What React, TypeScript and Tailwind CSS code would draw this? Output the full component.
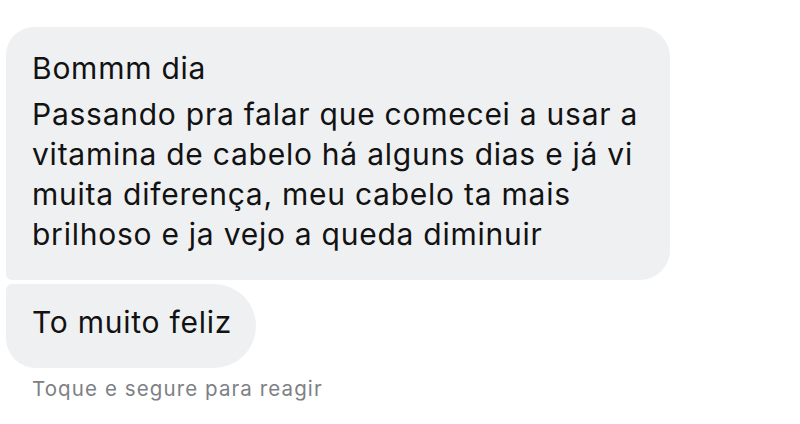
export default function App() {
  const lines = [
    "Passando pra falar que comecei a usar a",
    "vitamina de cabelo há alguns dias e já vi",
    "muita diferença, meu cabelo ta mais",
    "brilhoso e ja vejo a queda diminuir",
  ];

  return (
    <div className="w-[800px] h-[424px] bg-white overflow-hidden font-['Inter',sans-serif]">
      <div className="flex flex-col items-start pl-[6px] pt-[27px]">
        <div className="w-[664px] bg-[#eff0f2] rounded-tl-[28px] rounded-tr-[30px] rounded-br-[30px] rounded-bl-[6px] pl-[26px] pt-[21px] pb-[26px] text-[30px] leading-[40px] tracking-[0.75px] text-[#121212]">
          <p className="mb-[6px]">Bommm dia</p>
          {lines.map((l) => (
            <p key={l} className="whitespace-nowrap">{l}</p>
          ))}
        </div>
        <div className="mt-[4px] w-[250px] bg-[#eff0f2] rounded-tl-[6px] rounded-tr-[42px] rounded-br-[42px] rounded-bl-[30px] pl-[26px] pt-[18px] pb-[26px] text-[30px] leading-[40px] tracking-[0.75px] text-[#121212]">
          To muito feliz
        </div>
        <p className="mt-[9px] pl-[26px] text-[20.5px] leading-[24px] tracking-[1.1px] text-[#7d8085]">Toque e segure para reagir</p>
      </div>
    </div>
  );
}
